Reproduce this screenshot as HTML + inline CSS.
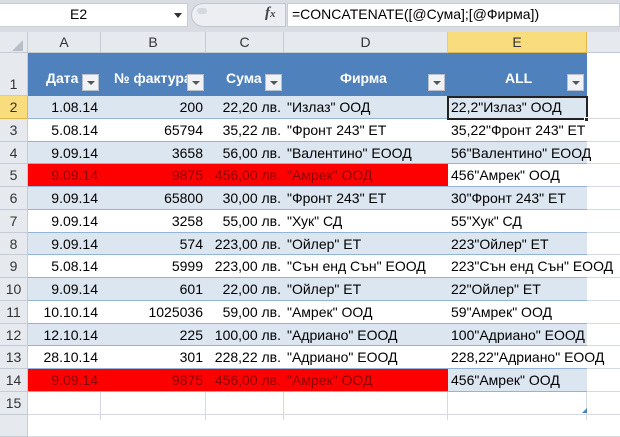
<!DOCTYPE html>
<html><head><meta charset="utf-8">
<style>
*{margin:0;padding:0;box-sizing:border-box}
body{width:620px;height:420px;overflow:hidden;background:#fff;font-family:"Liberation Sans",Arial,sans-serif;position:relative}
.a{position:absolute}
.c{position:absolute;font-size:14px;line-height:22px;white-space:nowrap;color:#000}
.r{text-align:right}
.hd{position:absolute;background:#e6e9ee;border-right:1px solid #c5cbd4;border-bottom:1px solid #c5cbd4;color:#333;font-size:14px;text-align:center}
.fb{position:absolute;width:17px;height:17px;background:#f0f2f5;border:1px solid #b9c0cb}
.fb:after{content:"";position:absolute;left:4px;top:6px;border-left:4px solid transparent;border-right:4px solid transparent;border-top:4px solid #555}
.th{position:absolute;color:#fff;font-weight:bold;font-size:14px}
</style></head><body>
<div class="a" style="left:0;top:0;width:620px;height:32px;background:#d9dde3"></div>
<div class="a" style="left:0;top:3px;width:188px;height:24px;background:#fff;border:1px solid #c9ced6;border-left:none"></div>
<div class="a" style="left:70px;top:6px;font-size:14px">E2</div>
<div class="a" style="left:174px;top:13px;border-left:4px solid transparent;border-right:4px solid transparent;border-top:5px solid #333"></div>
<div class="a" style="left:191px;top:3px;width:95px;height:24px;background:#eceef2;border:1px solid #c0c6cf;border-radius:12px 0 0 12px"></div>
<div class="a" style="left:197px;top:8px;width:10px;height:6px;background:#d5d9df;border-radius:5px"></div>
<div class="a" style="left:265px;top:5px;font-family:'Liberation Serif',serif;font-style:italic;font-weight:bold;font-size:15px;color:#444">f<span style="font-size:11px">x</span></div>
<div class="a" style="left:287px;top:3px;width:333px;height:24px;background:#fff;border:1px solid #c9ced6"></div>
<div class="a" style="left:292px;top:6px;font-size:14px">=CONCATENATE([@Сума];[@Фирма])</div>
<div class="hd" style="left:0;top:32px;width:28px;height:21px"></div>
<div class="a" style="left:12px;top:40px;border-left:11px solid transparent;border-bottom:11px solid #b8bec7"></div>
<div class="hd" style="left:28px;top:32px;width:73px;height:21px;line-height:20px">A</div>
<div class="hd" style="left:101px;top:32px;width:105px;height:21px;line-height:20px">B</div>
<div class="hd" style="left:206px;top:32px;width:78px;height:21px;line-height:20px">C</div>
<div class="hd" style="left:284px;top:32px;width:164px;height:21px;line-height:20px">D</div>
<div class="hd" style="left:448px;top:32px;width:139px;height:21px;line-height:20px;background:#f9dc7c;border-color:#e2b74a">E</div>
<div class="hd" style="left:587px;top:32px;width:40px;height:21px"></div>
<div class="hd" style="left:0;top:53px;width:28px;height:43px;line-height:62px">1</div>
<div id="rows"></div>
<div class="a" style="left:28px;top:53px;width:559px;height:43px;background:#4f81bd"></div>
<div class="th" style="left:46px;top:70px">Дата</div><div class="fb" style="left:82px;top:74px"></div>
<div class="th" style="left:114px;top:70px">№ фактура</div><div class="fb" style="left:187px;top:74px"></div>
<div class="th" style="left:226px;top:70px">Сума</div><div class="fb" style="left:265px;top:74px"></div>
<div class="th" style="left:340px;top:70px">Фирма</div><div class="fb" style="left:428px;top:74px"></div>
<div class="th" style="left:505px;top:70px">ALL</div><div class="fb" style="left:567px;top:74px"></div>
<script>
var d=[["1.08.14","200","22,20 лв.","\"Излаз\" ООД","22,2\"Излаз\" ООД"],
["5.08.14","65794","35,22 лв.","\"Фронт 243\" ЕТ","35,22\"Фронт 243\" ЕТ"],
["9.09.14","3658","56,00 лв.","\"Валентино\" ЕООД","56\"Валентино\" ЕООД"],
["9.09.14","9875","456,00 лв.","\"Амрек\" ООД","456\"Амрек\" ООД"],
["9.09.14","65800","30,00 лв.","\"Фронт 243\" ЕТ","30\"Фронт 243\" ЕТ"],
["9.09.14","3258","55,00 лв.","\"Хук\" СД","55\"Хук\" СД"],
["9.09.14","574","223,00 лв.","\"Ойлер\" ЕТ","223\"Ойлер\" ЕТ"],
["5.08.14","5999","223,00 лв.","\"Сън енд Сън\" ЕООД","223\"Сън енд Сън\" ЕООД"],
["9.09.14","601","22,00 лв.","\"Ойлер\" ЕТ","22\"Ойлер\" ЕТ"],
["10.10.14","1025036","59,00 лв.","\"Амрек\" ООД","59\"Амрек\" ООД"],
["12.10.14","225","100,00 лв.","\"Адриано\" ЕООД","100\"Адриано\" ЕООД"],
["28.10.14","301","228,22 лв.","\"Адриано\" ЕООД","228,22\"Адриано\" ЕООД"],
["9.09.14","9875","456,00 лв.","\"Амрек\" ООД","456\"Амрек\" ООД"]];
var h="";
for(var r=2;r<=16;r++){
 var t=Math.round(96+(r-2)*22.75), nt=Math.round(96+(r-1)*22.75), hh=nt-t;
 var sel=r==2;
 h+='<div class="hd" style="left:0;top:'+t+'px;width:28px;height:'+hh+'px;line-height:'+hh+'px;'+(sel?'background:#f9dc7c;border-color:#e2b74a':'')+'">'+(r<=15?r:'')+'</div>';
 h+='<div class="a" style="left:28px;top:'+(nt-1)+'px;width:592px;height:1px;background:#d4d9e2"></div>';
 if(r<=14){
  var row=d[r-2], band=r%2==0, red=(r==5||r==14);
  var bg=band?'#dce6f1':'#fff';
  h+='<div class="a" style="left:28px;top:'+t+'px;width:559px;height:'+(hh-1)+'px;background:'+bg+'"></div>';
  if(red)h+='<div class="a" style="left:28px;top:'+t+'px;width:420px;height:'+(hh-1)+'px;background:#ff0000"></div>';
  h+='<div class="a" style="left:28px;top:'+(nt-1)+'px;width:559px;height:1px;background:#95b3d7"></div>';
  var col=red?'#8a0000':'#000';
  h+='<div class="c r" style="left:28px;width:70px;top:'+t+'px;color:'+col+'">'+row[0]+'</div>';
  h+='<div class="c r" style="left:101px;width:102px;top:'+t+'px;color:'+col+'">'+row[1]+'</div>';
  h+='<div class="c r" style="left:206px;width:75px;top:'+t+'px;color:'+col+'">'+row[2]+'</div>';
  h+='<div class="c" style="left:287px;top:'+t+'px;color:'+col+'">'+row[3]+'</div>';
  h+='<div class="c" style="left:451px;top:'+t+'px">'+row[4]+'</div>';
 }
}
[100,205,283,447,586].forEach(function(x){h+='<div class="a" style="left:'+x+'px;top:53px;width:1px;height:367px;background:#d4d9e2;z-index:-1"></div>';});
h+='<div class="a" style="left:447px;top:96px;width:141px;height:24px;border:2px solid #222"></div>';
h+='<div class="a" style="left:584px;top:117px;width:5px;height:5px;background:#222;border:1px solid #fff"></div>';
h+='<div class="a" style="left:582px;top:408px;border-left:5px solid transparent;border-bottom:5px solid #4f81bd"></div>';
document.getElementById('rows').outerHTML=h;
</script>
</body></html>
